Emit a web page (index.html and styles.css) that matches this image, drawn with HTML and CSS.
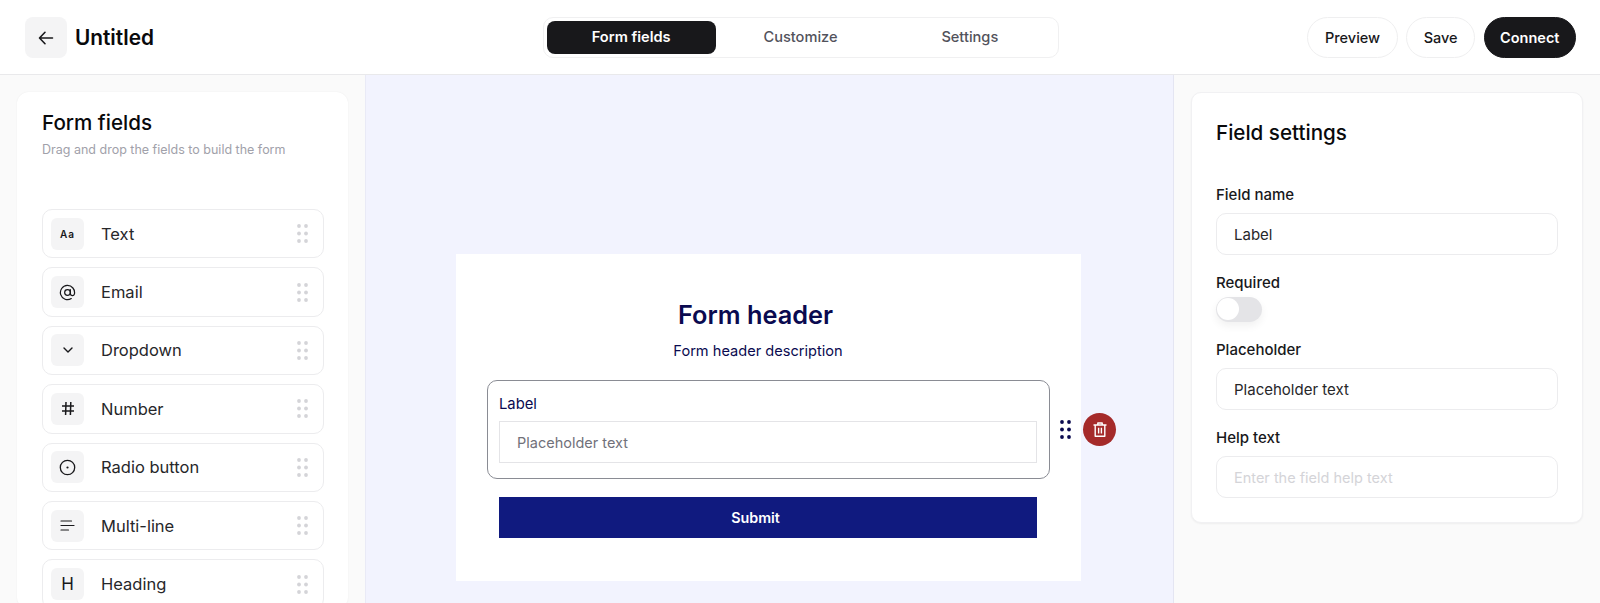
FILE: index.html
```html
<!DOCTYPE html>
<html lang="en">
<head>
    <meta charset="UTF-8">
    <meta name="viewport" content="width=device-width, initial-scale=1.0">
    <title>Form builder</title>
    <link rel="stylesheet" href="styles.css">
</head>
<body>
    <svg class="sprites" width="0" height="0">
        <symbol id="grip" viewBox="0 0 11 19">
            <circle cx="2" cy="2" r="1.9"/><circle cx="9" cy="2" r="1.9"/>
            <circle cx="2" cy="9.5" r="1.9"/><circle cx="9" cy="9.5" r="1.9"/>
            <circle cx="2" cy="17" r="1.9"/><circle cx="9" cy="17" r="1.9"/>
        </symbol>
    </svg>

    <header class="topbar">
        <div class="topbar-left">
            <button class="back-btn" type="button" aria-label="Back">
                <svg width="18" height="18" viewBox="0 0 18 18" fill="none" stroke="#18181b" stroke-width="1.6" stroke-linecap="round" stroke-linejoin="round"><path d="M15.5 9H2.8M8 3.3 2.5 9 8 14.7"/></svg>
            </button>
            <h1 class="page-title">Untitled</h1>
        </div>
        <nav class="tabs">
            <a class="tab tab-active">Form fields</a>
            <a class="tab">Customize</a>
            <a class="tab">Settings</a>
        </nav>
        <div class="actions">
            <button class="pill" type="button">Preview</button>
            <button class="pill" type="button">Save</button>
            <button class="pill pill-dark" type="button">Connect</button>
        </div>
    </header>

    <main class="workspace">
        <aside class="left-panel">
            <section class="fields-card">
                <h2 class="card-title">Form fields</h2>
                <p class="card-sub">Drag and drop the fields to build the form</p>
                <ul class="field-list">
                    <li class="field-item">
                        <span class="field-icon field-icon-aa">Aa</span>
                        <span class="field-name">Text</span>
                        <svg class="grip"><use href="#grip"/></svg>
                    </li>
                    <li class="field-item">
                        <span class="field-icon">
                            <svg width="17" height="17" viewBox="0 0 18 18" fill="none" stroke="#18181b" stroke-width="1.3" stroke-linecap="round"><circle cx="9" cy="9" r="3"/><path d="M12 6v4.2a2.2 2.2 0 0 0 4.3.5A7.5 7.5 0 1 0 13 15.4"/></svg>
                        </span>
                        <span class="field-name">Email</span>
                        <svg class="grip"><use href="#grip"/></svg>
                    </li>
                    <li class="field-item">
                        <span class="field-icon">
                            <svg width="12" height="8" viewBox="0 0 12 8" fill="none" stroke="#18181b" stroke-width="1.4" stroke-linecap="round" stroke-linejoin="round"><path d="M2 2l4 4 4-4"/></svg>
                        </span>
                        <span class="field-name">Dropdown</span>
                        <svg class="grip"><use href="#grip"/></svg>
                    </li>
                    <li class="field-item">
                        <span class="field-icon">
                            <svg width="14" height="15" viewBox="0 0 14 15" fill="none" stroke="#18181b" stroke-width="1.5"><path d="M1 5h12M1 10h12M5 1 4.6 14M9.8 1l-.4 13"/></svg>
                        </span>
                        <span class="field-name">Number</span>
                        <svg class="grip"><use href="#grip"/></svg>
                    </li>
                    <li class="field-item">
                        <span class="field-icon">
                            <svg width="17" height="17" viewBox="0 0 17 17" fill="none" stroke="#18181b" stroke-width="1.3"><circle cx="8.5" cy="8.5" r="7.2"/><circle cx="8.5" cy="8.5" r="1.1" fill="#18181b" stroke="none"/></svg>
                        </span>
                        <span class="field-name">Radio button</span>
                        <svg class="grip"><use href="#grip"/></svg>
                    </li>
                    <li class="field-item">
                        <span class="field-icon">
                            <svg width="15" height="11" viewBox="0 0 15 11" fill="none" stroke="#18181b" stroke-width="1.2" stroke-linecap="round"><path d="M1 1h10.5M1 5.5h13M1 10h7.5"/></svg>
                        </span>
                        <span class="field-name">Multi-line</span>
                        <svg class="grip"><use href="#grip"/></svg>
                    </li>
                    <li class="field-item">
                        <span class="field-icon field-icon-h">H</span>
                        <span class="field-name">Heading</span>
                        <svg class="grip"><use href="#grip"/></svg>
                    </li>
                </ul>
            </section>
        </aside>

        <section class="canvas">
            <div class="form-card">
                <h2 class="form-title">Form header</h2>
                <p class="form-desc">Form header description</p>
                <div class="form-field">
                    <label class="form-label" for="preview">Label</label>
                    <input class="form-input" id="preview" type="text" placeholder="Placeholder text">
                    <svg class="field-grip"><use href="#grip"/></svg>
                    <button class="delete-btn" type="button" aria-label="Delete">
                        <svg width="14" height="15" viewBox="0 0 14 15" fill="none" stroke="#fff" stroke-width="1.4" stroke-linejoin="round"><path d="M.5 3h13M4.8 3V1h4.4v2M2.2 3.2v11h9.6v-11M5.6 5.8v5.8M8.4 5.8v5.8"/></svg>
                    </button>
                </div>
                <button class="submit-btn" type="button">Submit</button>
            </div>
        </section>

        <aside class="right-panel">
            <section class="settings-card">
                <h2 class="card-title settings-title">Field settings</h2>
                <label class="set-label" for="fieldName">Field name</label>
                <input class="set-input" id="fieldName" type="text" value="Label">
                <span class="set-label set-label-gap">Required</span>
                <span class="toggle"><span class="toggle-knob"></span></span>
                <label class="set-label set-label-gap" for="fieldPlaceholder">Placeholder</label>
                <input class="set-input" id="fieldPlaceholder" type="text" value="Placeholder text">
                <label class="set-label set-label-gap" for="fieldHelp">Help text</label>
                <input class="set-input set-input-help" id="fieldHelp" type="text" placeholder="Enter the field help text">
            </section>
        </aside>
    </main>
</body>
</html>
```

FILE: styles.css
```css
* {
    box-sizing: border-box;
}

html,
body {
    height: 100%;
}

body {
    margin: 0;
    overflow: hidden;
    font-family: Inter, "Liberation Sans", sans-serif;
    color: #18181b;
    background-color: #fafafa;
}

button,
input {
    font-family: inherit;
}

.sprites {
    position: absolute;
}

/* top bar */
.topbar {
    height: 75px;
    display: grid;
    grid-template-columns: 1fr auto 1fr;
    align-items: center;
    padding: 1px 24px 0 25px;
    background-color: #fff;
    border-bottom: 1px solid #e9e9eb;
}

.topbar-left {
    display: flex;
    align-items: center;
    gap: 8px;
}

.back-btn {
    width: 42px;
    height: 41px;
    display: flex;
    align-items: center;
    justify-content: center;
    padding: 0;
    border: none;
    border-radius: 8px;
    background-color: #f4f4f5;
}

.page-title {
    margin: 0 0 1px;
    font-size: 20.8px;
    font-weight: 600;
    color: #09090b;
}

.tabs {
    width: 516px;
    height: 41px;
    display: grid;
    grid-template-columns: repeat(3, 1fr);
    padding: 3px;
    background-color: #fff;
    border: 1px solid #f0f0f1;
    border-radius: 10px;
}

.tab {
    display: flex;
    align-items: center;
    justify-content: center;
    padding-bottom: 1px;
    font-size: 14.6px;
    font-weight: 500;
    color: #52525b;
    border-radius: 8px;
}

.tab-active {
    font-weight: 600;
    color: #fff;
    background-color: #18181b;
}

.actions {
    display: flex;
    justify-content: flex-end;
    gap: 8.5px;
}

.pill {
    height: 41px;
    padding: 0 16.5px 1px;
    font-size: 14.5px;
    font-weight: 500;
    color: #18181b;
    background-color: #fff;
    border: 1px solid #efeff0;
    border-radius: 21px;
}

.pill-dark {
    padding: 0 15.5px 1px;
    font-weight: 600;
    color: #fff;
    background-color: #18181b;
    border-color: #18181b;
}

/* three columns */
.workspace {
    height: calc(100% - 75px);
    display: grid;
    grid-template-columns: 365px 1fr 426px;
}

.left-panel {
    padding: 17px 17px 0;
    background-color: #fafafa;
    overflow: hidden;
}

.fields-card {
    padding: 19px 24px 0 25px;
    background-color: #fff;
    border-radius: 12px;
    box-shadow: 0 0 2px rgba(0, 0, 0, 0.06);
}

.card-title {
    margin: 0;
    font-size: 20.6px;
    font-weight: 500;
    line-height: 24px;
    color: #09090b;
}

.card-sub {
    margin: 7px 0 0;
    font-size: 12.5px;
    line-height: 16px;
    color: #a1a1aa;
}

.field-list {
    list-style: none;
    margin: 0;
    padding: 0;
    margin-top: 51px;
    display: flex;
    flex-direction: column;
    gap: 9px;
}

.field-item {
    height: 49.4px;
    display: flex;
    align-items: center;
    padding: 0 10px 0 8px;
    border: 1px solid #ececee;
    border-radius: 10px;
}

.field-icon {
    width: 33px;
    height: 32px;
    flex: none;
    display: flex;
    align-items: center;
    justify-content: center;
    border-radius: 6px;
    background-color: #f4f4f5;
}

.field-icon-aa {
    font-size: 10px;
    font-weight: 600;
    letter-spacing: 1px;
}

.field-icon-h {
    font-size: 17px;
    font-weight: 400;
}

.field-name {
    flex: 1;
    margin-left: 17px;
    font-size: 16.5px;
    color: #27272a;
}

.grip {
    width: 11px;
    height: 19px;
    margin-right: 5px;
    fill: #d4d4d8;
}

/* form preview */
.canvas {
    display: flex;
    justify-content: center;
    padding: 179px 2px 0 0;
    background-color: #f2f3fe;
    box-shadow: inset 1px 0 0 #e9eaf6, inset -1px 0 0 #e4e5f2;
}

.form-card {
    width: 625px;
    height: 327px;
    padding: 46px 44px 0 43px;
    color: #0a0a50;
    background-color: #fff;
}

.form-title {
    margin: 0;
    padding-right: 25px;
    font-size: 25.3px;
    font-weight: 600;
    line-height: 30px;
    text-align: center;
}

.form-desc {
    margin: 11px 0 0;
    padding-right: 20px;
    font-size: 14.6px;
    line-height: 20px;
    text-align: center;
}

.form-field {
    position: relative;
    margin: 19px -13px 0 -12px;
    height: 99px;
    padding: 13px 12px 0 11px;
    border: 1px solid #8a8c94;
    border-radius: 10px;
}

.form-label {
    display: block;
    font-size: 14.8px;
    line-height: 20px;
}

.form-input {
    display: block;
    width: 100%;
    height: 42px;
    margin-top: 7px;
    padding: 0 17px;
    font-size: 14.5px;
    color: #18181b;
    background-color: #fff;
    border: 1px solid #e4e4e7;
    border-radius: 0;
    outline: none;
}

.form-input::placeholder {
    color: #71717a;
    opacity: 1;
}

.field-grip {
    position: absolute;
    top: 39px;
    right: -22px;
    width: 11px;
    height: 19px;
    fill: #0a0a50;
}

.delete-btn {
    position: absolute;
    top: 32px;
    right: -67px;
    width: 33px;
    height: 33px;
    display: flex;
    align-items: center;
    justify-content: center;
    padding: 0;
    border: none;
    border-radius: 50%;
    background-color: #a52a2a;
}

.submit-btn {
    display: block;
    width: 100%;
    height: 41px;
    margin-top: 18px;
    padding: 0 25px 0 0;
    font-size: 14.3px;
    font-weight: 600;
    color: #fff;
    background-color: #101a7f;
    border: none;
}

/* field settings */
.right-panel {
    padding: 17px 17px 0;
    background-color: #fafafa;
}

.settings-card {
    height: 431px;
    padding: 28px 24px 0;
    background-color: #fff;
    border: 1px solid #f1f1f3;
    border-radius: 10px;
    box-shadow: 0 1px 2px rgba(0, 0, 0, 0.05);
}

.settings-title {
    margin-bottom: 40px;
}

.set-label {
    display: block;
    font-size: 15px;
    font-weight: 500;
    line-height: 20px;
    color: #18181b;
}

.set-label-gap {
    margin-top: 18px;
}

.set-input {
    display: block;
    width: 100%;
    height: 42px;
    margin-top: 8px;
    padding: 0 17px;
    font-size: 15px;
    color: #27272a;
    background-color: #fff;
    border: 1px solid #ececee;
    border-radius: 10px;
    outline: none;
}

.set-input-help {
    font-size: 14.5px;
}

.set-input::placeholder {
    color: #d4d4d8;
    opacity: 1;
}

.toggle {
    display: block;
    width: 46px;
    height: 25px;
    margin-top: 4px;
    padding: 1px;
    background-color: #e4e4e7;
    border-radius: 13px;
    box-shadow: 0 4px 8px rgba(0, 0, 0, 0.06);
}

.toggle-knob {
    display: block;
    width: 22px;
    height: 22px;
    background-color: #fff;
    border-radius: 50%;
}
```
